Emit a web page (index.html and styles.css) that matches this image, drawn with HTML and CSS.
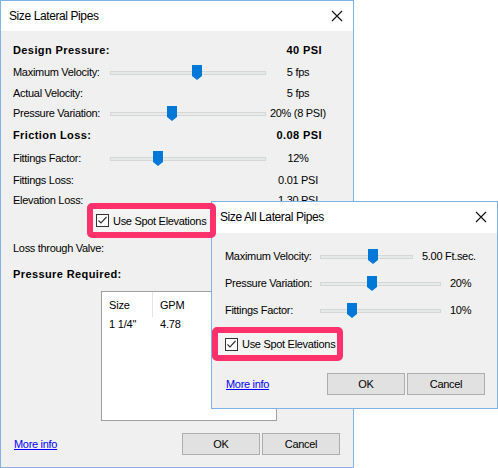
FILE: index.html
```html
<!DOCTYPE html>
<html>
<head>
<meta charset="utf-8">
<link rel="stylesheet" href="styles.css">
</head>
<body>
<div class="desk">

  <div class="win win-main">
    <div class="titlebar">
      <span class="title">Size Lateral Pipes</span>
      <svg class="close" width="12" height="12" viewBox="0 0 12 12"><path d="M1 1L11 11M11 1L1 11" stroke="#111" stroke-width="1.1"/></svg>
    </div>
    <div class="body">
      <div class="row head r-design"><span>Design Pressure:</span><span>40 PSI</span></div>
      <div class="row r-mv">
        <span class="lbl">Maximum Velocity:</span>
        <div class="slider"><div class="track"></div><svg class="thumb" style="left:56%" width="10" height="15" viewBox="0 0 10 15"><path d="M0 0H10V11L5 15L0 11Z" fill="#0078d7"/></svg></div>
        <span class="val">5 fps</span>
      </div>
      <div class="row r-av">
        <span class="lbl">Actual Velocity:</span><span></span>
        <span class="val">5 fps</span>
      </div>
      <div class="row r-pv">
        <span class="lbl">Pressure Variation:</span>
        <div class="slider"><div class="track"></div><svg class="thumb" style="left:40%" width="10" height="15" viewBox="0 0 10 15"><path d="M0 0H10V11L5 15L0 11Z" fill="#0078d7"/></svg></div>
        <span class="val">20% (8 PSI)</span>
      </div>
      <div class="row head r-fric"><span>Friction Loss:</span><span>0.08 PSI</span></div>
      <div class="row r-ff">
        <span class="lbl">Fittings Factor:</span>
        <div class="slider"><div class="track"></div><svg class="thumb" style="left:30.5%" width="10" height="15" viewBox="0 0 10 15"><path d="M0 0H10V11L5 15L0 11Z" fill="#0078d7"/></svg></div>
        <span class="val">12%</span>
      </div>
      <div class="row r-fl">
        <span class="lbl">Fittings Loss:</span><span></span>
        <span class="val">0.01 PSI</span>
      </div>
      <div class="row r-el">
        <span class="lbl">Elevation Loss:</span><span></span>
        <span class="val">1.30 PSI</span>
      </div>
      <div class="hl hl-main">
        <div class="hl-inner">
          <svg class="cb" width="13" height="13" viewBox="0 0 13 13"><rect x="0.5" y="0.5" width="12" height="12" fill="#fff" stroke="#333"/><path d="M2.5 6.5L5 9L10.5 3" fill="none" stroke="#333" stroke-width="1.2"/></svg>
          <span>Use Spot Elevations</span>
        </div>
      </div>
      <div class="row r-valve"><span class="lbl">Loss through Valve:</span></div>
      <div class="row head r-req"><span>Pressure Required:</span></div>
      <div class="list">
        <div class="list-head"><span class="c1">Size</span><span class="sep"></span><span class="c2">GPM</span></div>
        <div class="list-row"><span class="c1">1 1/4"</span><span class="c2">4.78</span></div>
      </div>
      <div class="footer">
        <a class="link" href="#">More info</a>
        <div class="btns"><span class="btn">OK</span><span class="btn">Cancel</span></div>
      </div>
    </div>
  </div>

  <div class="win win-all">
    <div class="titlebar titlebar-all">
      <span class="title">Size All Lateral Pipes</span>
      <svg class="close" width="12" height="12" viewBox="0 0 12 12"><path d="M1 1L11 11M11 1L1 11" stroke="#111" stroke-width="1.1"/></svg>
    </div>
    <div class="body body-all">
      <div class="arow">
        <span class="albl">Maximum Velocity:</span>
        <div class="slider s-short"><div class="track"></div><svg class="thumb" style="left:57%" width="10" height="15" viewBox="0 0 10 15"><path d="M0 0H10V11L5 15L0 11Z" fill="#0078d7"/></svg></div>
        <span class="aval">5.00 Ft.sec.</span>
      </div>
      <div class="arow">
        <span class="albl">Pressure Variation:</span>
        <div class="slider s-long"><div class="track"></div><svg class="thumb" style="left:43%" width="10" height="15" viewBox="0 0 10 15"><path d="M0 0H10V11L5 15L0 11Z" fill="#0078d7"/></svg></div>
        <span class="aval">20%</span>
      </div>
      <div class="arow">
        <span class="albl">Fittings Factor:</span>
        <div class="slider s-long"><div class="track"></div><svg class="thumb" style="left:26.5%" width="10" height="15" viewBox="0 0 10 15"><path d="M0 0H10V11L5 15L0 11Z" fill="#0078d7"/></svg></div>
        <span class="aval">10%</span>
      </div>
      <div class="hl hl-all">
        <div class="hl-inner">
          <svg class="cb" width="13" height="13" viewBox="0 0 13 13"><rect x="0.5" y="0.5" width="12" height="12" fill="#fff" stroke="#333"/><path d="M2.5 6.5L5 9L10.5 3" fill="none" stroke="#333" stroke-width="1.2"/></svg>
          <span>Use Spot Elevations</span>
        </div>
      </div>
      <div class="footer footer-all">
        <a class="link" href="#">More info</a>
        <div class="btns"><span class="btn">OK</span><span class="btn">Cancel</span></div>
      </div>
    </div>
  </div>

</div>
</body>
</html>
```

FILE: styles.css
```css
* { box-sizing: border-box; }
html, body { margin: 0; padding: 0; background: #fff; }
body {
  font-family: "Liberation Sans", Arial, sans-serif;
  font-size: 11px;
  color: #000;
}
.desk { position: relative; width: 498px; height: 468px; overflow: hidden; }

.win {
  position: absolute;
  border: 1px solid #7fb3e8;
  background: #f0f0f0;
  display: flex;
  flex-direction: column;
}
.win-main { left: 0; top: 0; width: 354px; height: 468px; }
.win-all { left: 211px; top: 201px; width: 287px; height: 208px; }

.titlebar {
  height: 30px;
  flex: none;
  background: #fff;
  display: flex;
  align-items: center;
  justify-content: space-between;
  padding: 0 10px 0 8px;
}
.titlebar-all { height: 31px; padding-bottom: 1px; }
.title {
  font-size: 12px;
  letter-spacing: -0.4px;
  color: #000;
}
.close { display: block; }

.body {
  flex: 1;
  display: flex;
  flex-direction: column;
  padding: 9px 13px 0 12px;
  letter-spacing: -0.3px;
}

.row {
  height: 20px;
  display: grid;
  grid-template-columns: 97px 156px 64px;
  align-items: center;
}
.row.head {
  display: flex;
  justify-content: space-between;
  width: 309px;
  font-weight: bold;
  letter-spacing: 0.4px;
}
.val { text-align: center; }
.r-mv { margin-top: 2px; }
.r-av { margin-top: 1px; }
.r-fric { margin-top: 2px; }
.r-ff { margin-top: 3px; }
.r-fl { margin-top: 2px; }
.r-req { margin-top: 6px; }

.slider { position: relative; height: 20px; }
.track {
  position: absolute;
  left: 0; right: 0; top: 9px;
  height: 4px;
  background: #e7eaea;
  border: 1px solid #d6d6d6;
}
.thumb {
  position: absolute;
  top: 3px;
  margin-left: -5px;
}

.hl {
  position: relative;
  z-index: 5;
  align-self: flex-start;
  border: 6px solid #ff316c;
  border-radius: 5px;
  background: #ff316c;
}
.hl-inner {
  display: flex;
  align-items: center;
  gap: 4px;
  background: #f4f4f4;
  height: 22px;
  padding-left: 3px;
  padding-right: 1px;
  font-size: 11px;
}
.cb { display: block; flex: none; }
.hl-main { margin: -7px 0 0 74px; width: 129px; }
.hl-main .hl-inner { height: 23px; }
.hl-all { margin: 7px 0 0 -13px; width: 131px; }
.hl-all .hl-inner { padding-left: 7px; }

.r-valve { display: flex; }

.list {
  margin: 7px 0 0 88px;
  width: 176px;
  height: 130px;
  background: #fff;
  border: 1px solid #a0a0a0;
  letter-spacing: -0.2px;
}
.list-head, .list-row {
  display: flex;
  align-items: center;
  position: relative;
}
.list-head { height: 25px; }
.list-row { height: 14px; }
.c1 { width: 50px; padding-left: 7px; }
.c2 { padding-left: 7px; }
.sep { width: 1px; height: 25px; background: #e5e5e5; }
.list-row .c1 { width: 51px; }

.footer {
  margin-top: 12px;
  display: flex;
  justify-content: space-between;
  align-items: center;
}
.link { color: #0000ff; text-decoration: underline; padding-left: 1px; }
.btns { display: flex; gap: 2px; }
.btn {
  width: 78px;
  height: 22px;
  display: flex;
  align-items: center;
  justify-content: center;
  background: #e1e1e1;
  border: 1px solid #adadad;
  font-size: 11px;
}

.body-all { padding: 13px 12px 0 13px; }
.arow {
  height: 20px;
  display: flex;
  align-items: center;
  margin-bottom: 7px;
}
.albl { width: 95px; }
.s-short { width: 93px; }
.s-long { width: 121px; }
.aval { margin-left: 9px; }
.body-all .hl-all { margin-top: 0; }
.footer-all { margin-top: 12px; }
```
